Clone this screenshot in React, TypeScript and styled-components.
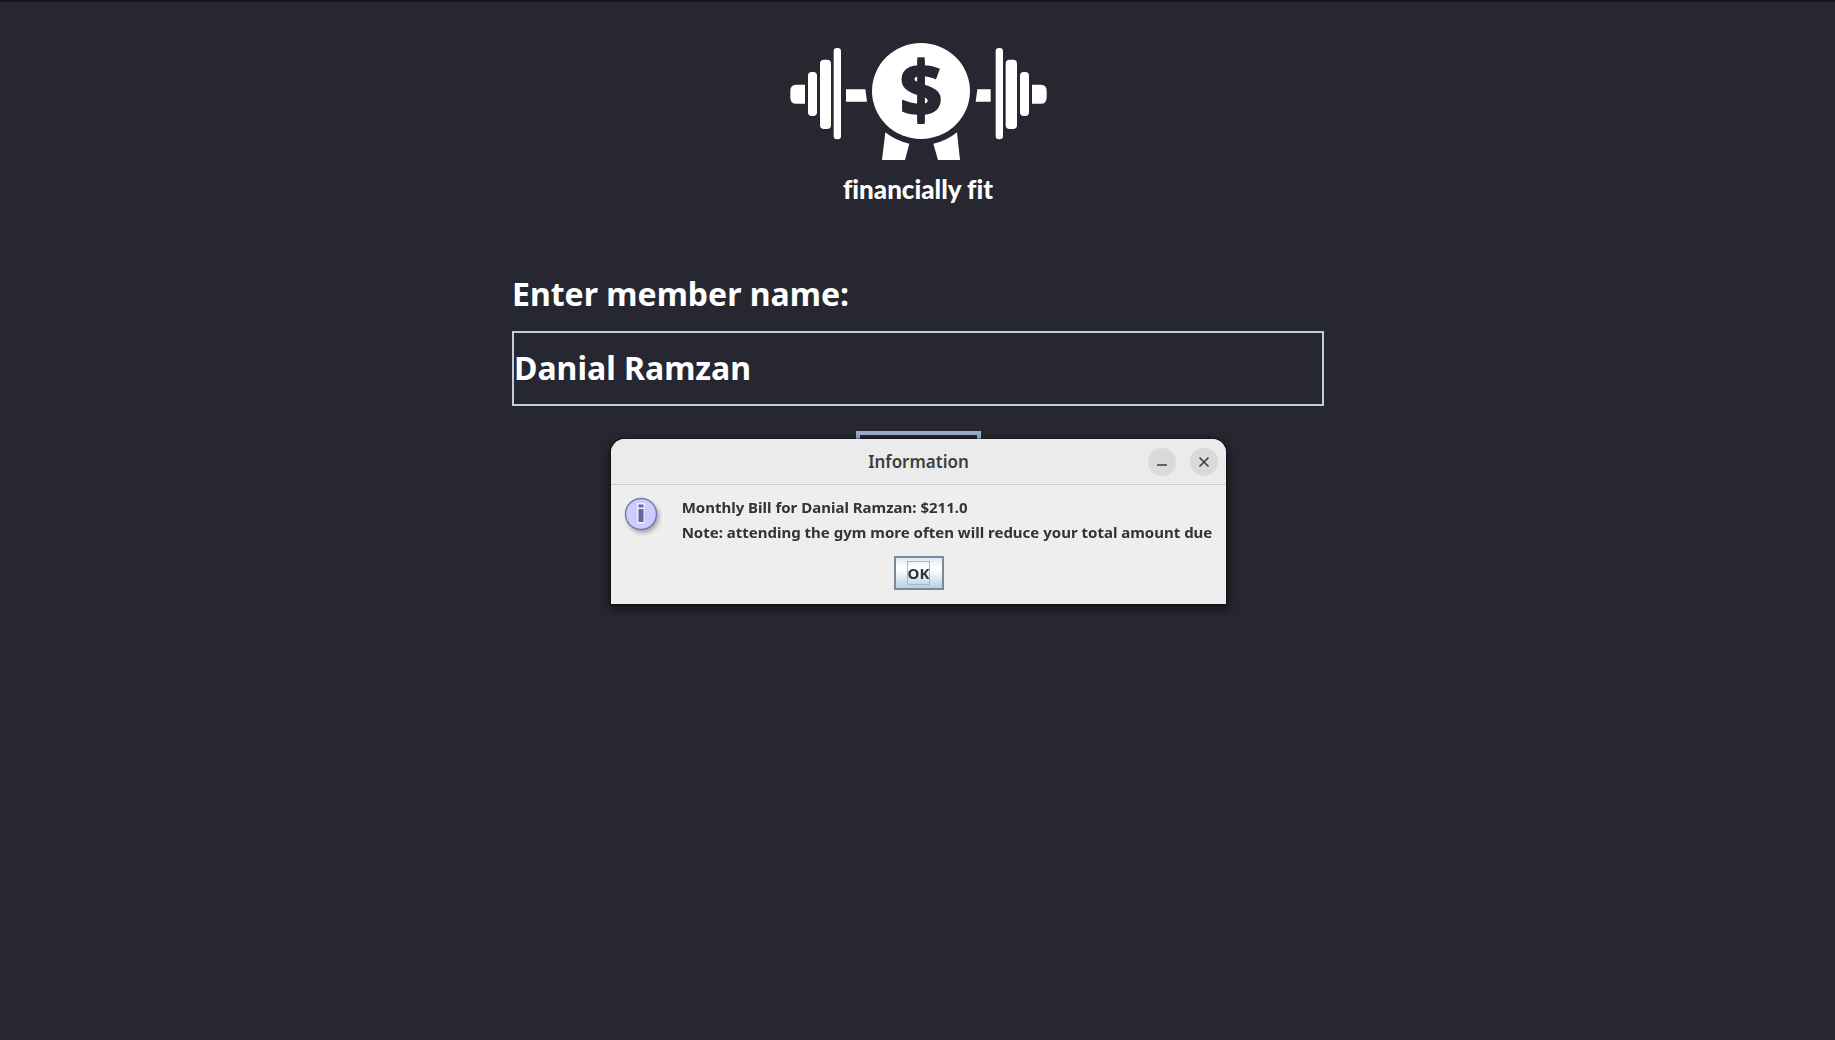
import React, { useState } from "react";
import styled, { createGlobalStyle } from "styled-components";

const GlobalStyle = createGlobalStyle`
  *, *::before, *::after { box-sizing: border-box; }
  body {
    margin: 0;
    background: #262730;
    font-family: "Noto Sans", "Open Sans", sans-serif;
  }
`;

const Page = styled.main`
  min-height: 100vh;
  border-top: 2px solid #151515;
  background: #262730;
  color: #ffffff;
  display: flex;
  flex-direction: column;
  align-items: center;
  padding: 28px 24px 40px 25px;
`;

const Brand = styled.header`
  display: flex;
  flex-direction: column;
  align-items: center;
  gap: 12px;
`;

const LogoMark = styled.svg`
  display: block;
  width: 257px;
  height: 131px;
  fill: #ffffff;
  overflow: visible;
`;

const LogoDollar = styled.text`
  font-family: "Noto Sans", "Open Sans", sans-serif;
  font-size: 222px;
  font-weight: 800;
  fill: #262730;
`;

const Wordmark = styled.span`
  font-family: Lato, sans-serif;
  font-size: 26px;
  line-height: 32px;
  font-weight: 900;
  font-variant-ligatures: none;
`;

const BillForm = styled.form`
  width: 100%;
  max-width: 812px;
  margin-top: 67px;
  display: flex;
  flex-direction: column;
`;

const FieldLabel = styled.label`
  font-size: 32px;
  line-height: 44px;
  font-weight: 700;
`;

const NameInput = styled.input`
  width: 100%;
  height: 75px;
  margin-top: 15px;
  padding: 0 0 2px;
  border: 2px solid #c3ccd6;
  border-radius: 0;
  outline: none;
  background: transparent;
  color: #ffffff;
  font-family: inherit;
  font-size: 32px;
  font-weight: 700;
`;

const SubmitButton = styled.button`
  align-self: center;
  width: 125px;
  height: 64px;
  margin-top: 25px;
  border: 4px solid #9db0cb;
  background: #262730;
  color: #ffffff;
  font-family: inherit;
  font-size: 32px;
  font-weight: 700;
`;

const Overlay = styled.div`
  position: fixed;
  inset: 2px 0 0;
  display: flex;
  align-items: center;
  justify-content: center;
  padding: 1px 0 0 2px;
`;

const Dialog = styled.section`
  border-radius: 14px 14px 0 0;
  background: #eeeeee;
  color: #333333;
  box-shadow: 0 0 0 1px rgba(0, 0, 0, 0.25), 0 3px 10px 2px rgba(0, 0, 0, 0.5);
  overflow: hidden;
`;

const TitleBar = styled.header`
  display: grid;
  grid-template-columns: 1fr auto 1fr;
  align-items: center;
  height: 46px;
  padding: 0 8px;
  background: #ebebeb;
  border-bottom: 1px solid #cccccc;
`;

const Title = styled.h2`
  grid-column: 2;
  margin: 0;
  color: #3d3d3d;
  font-size: 17px;
  line-height: 24px;
  font-weight: 600;
`;

const WindowControls = styled.div`
  display: flex;
  justify-content: flex-end;
  gap: 14px;
`;

const WindowButton = styled.button`
  display: grid;
  place-items: center;
  width: 28px;
  height: 28px;
  padding: 0;
  border: 0;
  border-radius: 50%;
  background: #dadada;
  color: #3d3d3d;
`;

const DialogBody = styled.div`
  display: flex;
  gap: 20px;
  padding: 10px 14px 0 13px;
`;

const InfoIcon = styled.svg`
  flex: none;
  width: 38px;
  height: 42px;
`;

const Message = styled.p`
  margin: 0;
  font-size: 15px;
  line-height: 25px;
  font-weight: 700;
`;

const Actions = styled.footer`
  display: flex;
  justify-content: center;
  padding: 11px 0 14px;
`;

const OkButton = styled.button`
  display: grid;
  place-items: center;
  width: 50px;
  height: 34px;
  padding: 0;
  border: 2px solid #7a8a99;
  background: linear-gradient(#dde8f3, #ffffff 30%, #ffffff 40%, #b8cfe5);
  color: #333333;
  font-family: inherit;
  font-size: 15px;
  font-weight: 700;
`;

const OkLabel = styled.span`
  line-height: 22px;
  border: 1px solid #a3b8cc;
`;

function Logo() {
  return (
    <LogoMark viewBox="30 0 771 393" aria-hidden="true">
      <path d="M75 164H48Q31 164 31 182V203Q31 221 48 221H75Z" />
      <rect x="84" y="126" width="27" height="132" rx="11" />
      <rect x="120" y="89" width="33" height="208" rx="12" />
      <rect x="161" y="54" width="22" height="274" rx="10" />
      <path d="M198 178H256L261 215H198Z" />
      <ellipse cx="423" cy="183" rx="147" ry="144" />
      <path d="M592 178H632V215H587Z" />
      <rect x="647" y="54" width="22" height="274" rx="10" />
      <rect x="677" y="89" width="34" height="208" rx="12" />
      <rect x="720" y="126" width="27" height="132" rx="11" />
      <path d="M756 164H782Q800 164 800 182V203Q800 221 782 221H756Z" />
      <path d="M316 307Q348 333 388 341L375 390H306Z" />
      <path d="M531 307Q500 333 460 341L474 390H540Z" />
      <rect x="412" y="82" width="22" height="200" fill="#262730" />
      <LogoDollar x="423" y="262" textAnchor="middle" stroke="#262730" strokeWidth="5">$</LogoDollar>
    </LogoMark>
  );
}

function Info() {
  return (
    <InfoIcon viewBox="0 -2 38 42" aria-hidden="true">
      <defs>
        <filter id="info-shadow" x="-30%" y="-30%" width="160%" height="160%">
          <feGaussianBlur stdDeviation="2" />
        </filter>
      </defs>
      <circle cx="19" cy="20" r="16" fill="#8c8c8c" opacity="0.75" filter="url(#info-shadow)" />
      <circle cx="17" cy="17" r="15.5" fill="#ccccff" stroke="#7777ad" strokeWidth="1.4" />
      <path d="M13 6H21V12H20.5V26.5H13V12Z" fill="#eeeeff" />
      <path d="M14.5 7.5H19.5V10.5H14.5ZM14.5 12H19.5V25H14.5Z" fill="#666699" />
    </InfoIcon>
  );
}

export default function App() {
  const [name, setName] = useState("Danial Ramzan");
  const [open, setOpen] = useState(true);

  return (
    <>
      <GlobalStyle />
      <Page>
        <Brand>
          <Logo />
          <Wordmark>financially fit</Wordmark>
        </Brand>
        <BillForm
          onSubmit={(event) => {
            event.preventDefault();
            setOpen(true);
          }}
        >
          <FieldLabel htmlFor="member-name">Enter member name:</FieldLabel>
          <NameInput
            id="member-name"
            type="text"
            autoComplete="off"
            spellCheck={false}
            value={name}
            onChange={(event) => setName(event.target.value)}
          />
          <SubmitButton type="submit" aria-label="Submit" />
        </BillForm>
      </Page>
      {open && (
        <Overlay>
          <Dialog role="dialog" aria-labelledby="dialog-title">
            <TitleBar>
              <Title id="dialog-title">Information</Title>
              <WindowControls>
                <WindowButton type="button" aria-label="Minimize">
                  <svg width="12" height="12" viewBox="0 0 12 12" aria-hidden="true">
                    <path d="M1 9H11" stroke="currentColor" strokeWidth="1.5" />
                  </svg>
                </WindowButton>
                <WindowButton type="button" aria-label="Close" onClick={() => setOpen(false)}>
                  <svg width="12" height="12" viewBox="0 0 12 12" aria-hidden="true">
                    <path d="M1.5 1.5L10.5 10.5M10.5 1.5L1.5 10.5" stroke="currentColor" strokeWidth="1.6" />
                  </svg>
                </WindowButton>
              </WindowControls>
            </TitleBar>
            <DialogBody>
              <Info />
              <Message>
                Monthly Bill for Danial Ramzan: $211.0
                <br />
                Note: attending the gym more often will reduce your total amount due
              </Message>
            </DialogBody>
            <Actions>
              <OkButton type="button" onClick={() => setOpen(false)}>
                <OkLabel>OK</OkLabel>
              </OkButton>
            </Actions>
          </Dialog>
        </Overlay>
      )}
    </>
  );
}
